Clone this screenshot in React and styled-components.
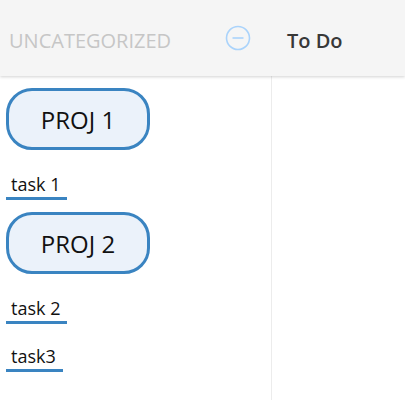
import React from "react";
import styled, { createGlobalStyle } from "styled-components";

const Global = createGlobalStyle`
  html, body { margin: 0; padding: 0; background: #fff; }
  body { font-family: "Open Sans", "Noto Sans", sans-serif; }
`;

const Page = styled.div`
  width: 405px;
  height: 400px;
  display: flex;
  flex-direction: column;
  overflow: hidden;
`;

const Header = styled.header`
  height: 76px;
  flex: none;
  background: #f5f5f5;
  box-shadow: 0 1px 3px rgba(0, 0, 0, 0.18);
  display: flex;
  align-items: center;
  position: relative;
  z-index: 1;
`;

const HeaderLeft = styled.div`
  width: 272px;
  flex: none;
  display: flex;
  align-items: center;
  padding-left: 9px;
  box-sizing: border-box;
`;

const Category = styled.span`
  font-size: 20px;
  color: #c6c6c6;
  width: 216px;
  padding-top: 5px;
`;

const Title = styled.span`
  font-size: 20px;
  font-weight: 600;
  color: #383838;
  margin-left: 15px;
  padding-top: 5px;
`;

const Body = styled.div`
  flex: 1;
  display: flex;
`;

const Column = styled.div`
  width: 272px;
  flex: none;
  border-right: 1px solid #ececec;
  box-sizing: border-box;
  padding: 12px 6px 0;
  display: flex;
  flex-direction: column;
  align-items: flex-start;
`;

const Project = styled.div`
  width: 144px;
  height: 62px;
  box-sizing: border-box;
  border: 3px solid #3a84c1;
  border-radius: 26px;
  background: #ebf2fa;
  display: flex;
  align-items: center;
  justify-content: center;
  font-size: 24px;
  color: #111;
  margin-top: ${(p) => (p.$first ? "0" : "12px")};
  margin-bottom: 2px;
`;

const Task = styled.div`
  font-size: 18px;
  line-height: 26px;
  color: #111;
  padding: 19px 7px 0 5px;
  border-bottom: 3px solid #3a84c1;
`;

const MinusIcon = () => (
  <svg width="26" height="26" viewBox="0 0 26 26">
    <circle cx="13" cy="13" r="11.5" fill="none" stroke="#aad3fb" strokeWidth="1.6" />
    <line x1="7.5" y1="13" x2="18.5" y2="13" stroke="#aad3fb" strokeWidth="1.6" />
  </svg>
);

export default function App() {
  return (
    <Page>
      <Global />
      <Header>
        <HeaderLeft>
          <Category>UNCATEGORIZED</Category>
          <MinusIcon />
        </HeaderLeft>
        <Title>To Do</Title>
      </Header>
      <Body>
        <Column>
          <Project $first>PROJ 1</Project>
          <Task>task 1</Task>
          <Project>PROJ 2</Project>
          <Task>task 2</Task>
          <Task>task3</Task>
        </Column>
      </Body>
    </Page>
  );
}
